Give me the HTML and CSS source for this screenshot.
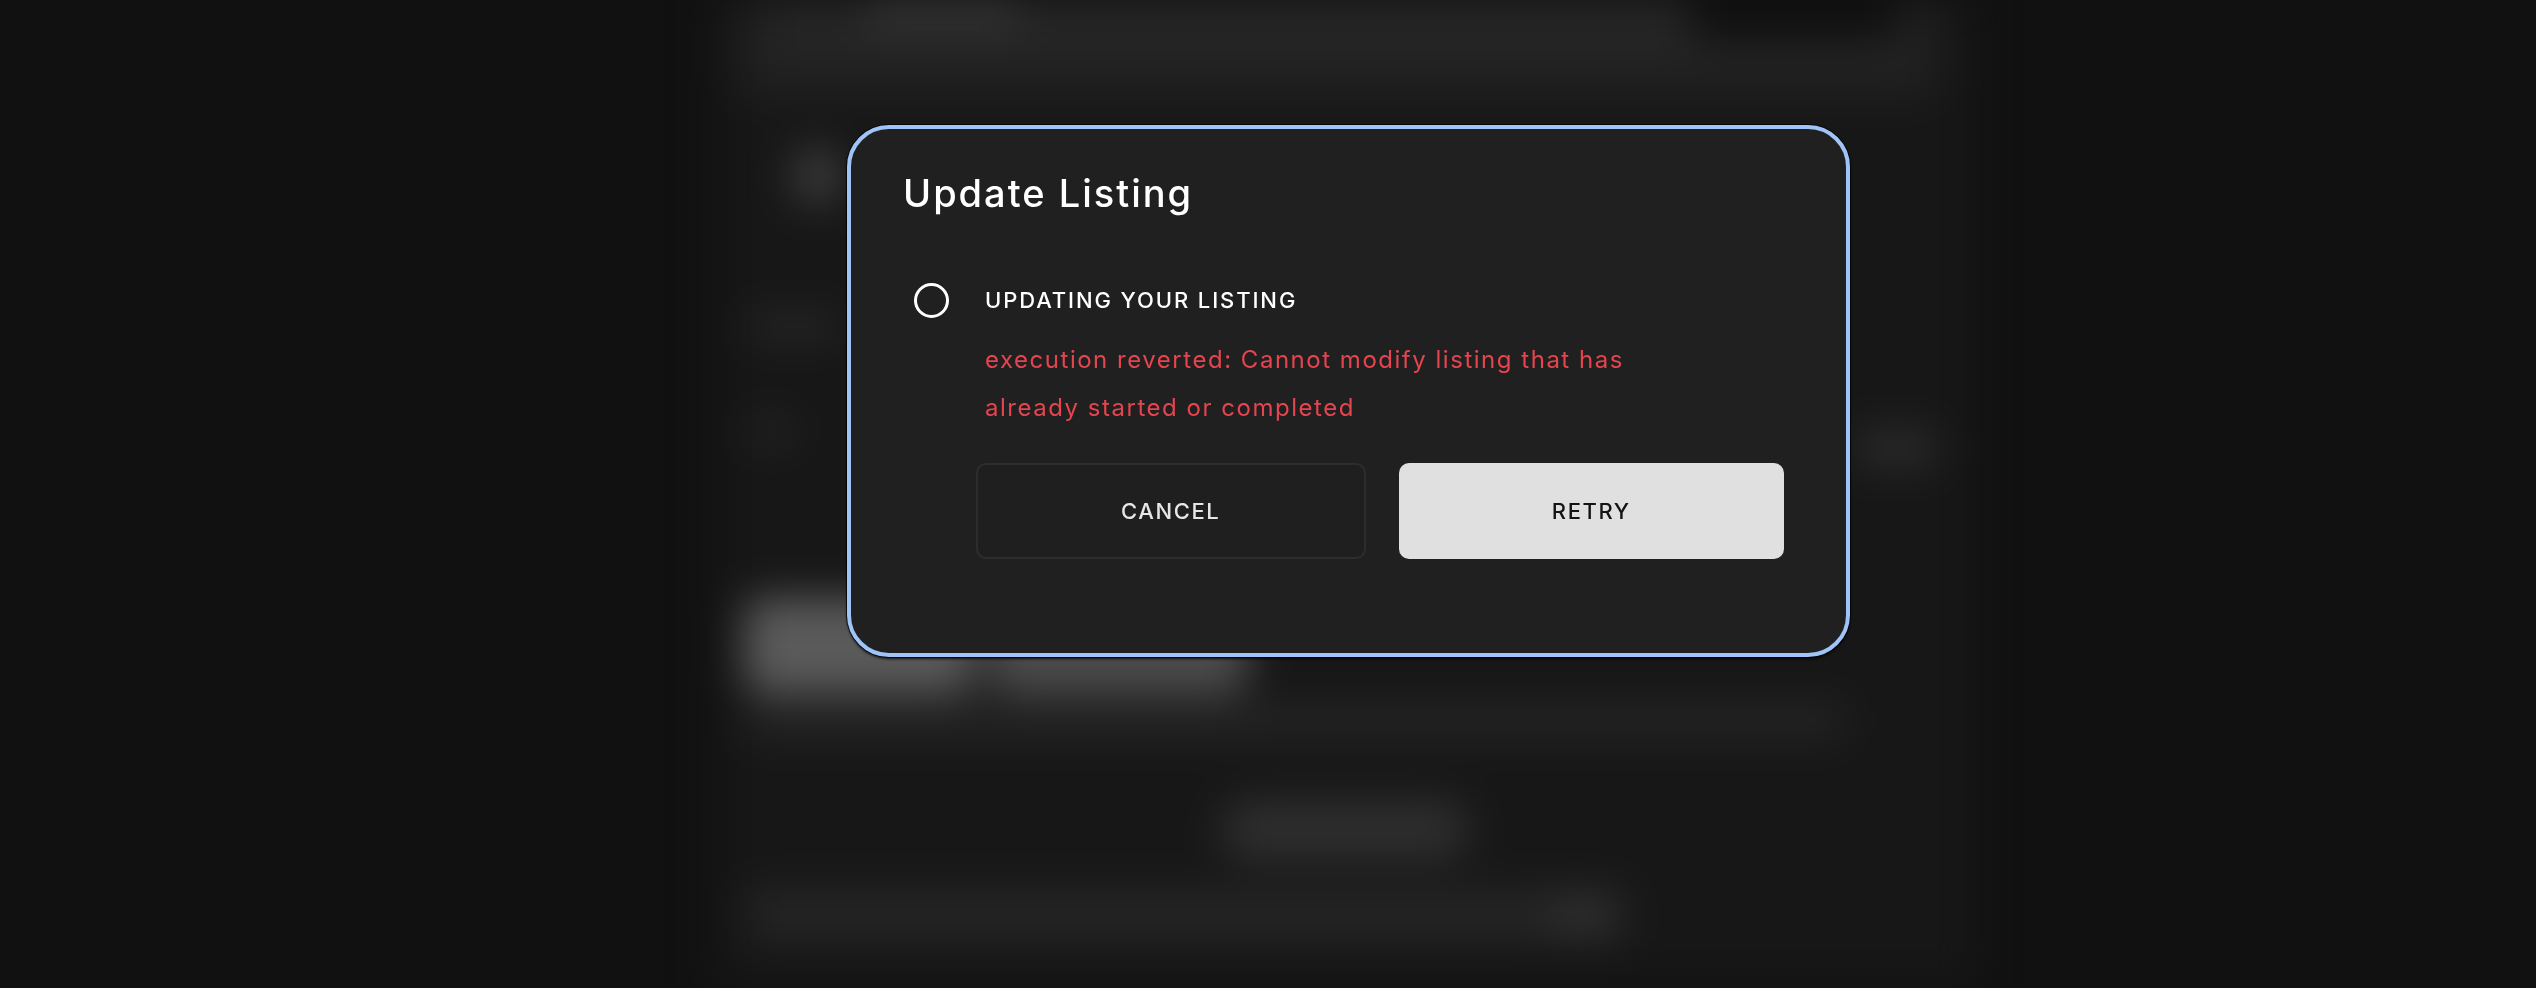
FILE: index.html
```html
<!DOCTYPE html>
<html lang="en">
<head>
<meta charset="utf-8">
<title>Update Listing</title>
<link rel="stylesheet" href="styles.css">
</head>
<body>
<div class="page" aria-hidden="true">
  <div class="top-card">
    <div class="search">
      <span class="search-text"></span>
      <span class="search-btn"></span>
    </div>
  </div>
  <div class="avatar"></div>
  <div class="line l1"></div>
  <div class="row-between">
    <span class="line l2"></span>
    <span class="chip"></span>
  </div>
  <div class="heading">
    <span class="hw w1"></span>
    <span class="hw w2"></span>
  </div>
  <div class="subtext"></div>
  <div class="pill"></div>
  <div class="bottom-row"><span class="bottom-tag"></span></div>
</div>

<div class="overlay">
  <div class="modal" role="dialog" aria-labelledby="modal-title">
    <h2 class="modal-title" id="modal-title">Update Listing</h2>
    <div class="step">
      <span class="step-icon"></span>
      <span class="step-label">UPDATING YOUR LISTING</span>
    </div>
    <p class="step-error">execution reverted: Cannot modify listing that has already started or completed</p>
    <div class="actions">
      <button class="btn btn-cancel" type="button">CANCEL</button>
      <button class="btn btn-retry" type="button">RETRY</button>
    </div>
  </div>
</div>
</body>
</html>
```

FILE: styles.css
```css
* { box-sizing: border-box; }

html, body {
  margin: 0;
  padding: 0;
  width: 2536px;
  height: 988px;
  overflow: hidden;
  background: #111111;
  font-family: Inter, "Liberation Sans", sans-serif;
}

/* ---------- blurred page behind the dialog ---------- */
.page {
  width: 1262px;
  height: 988px;
  margin-left: 714px;
  background: #171717;
  filter: blur(20px);
  display: flex;
  flex-direction: column;
  overflow: hidden;
}

.top-card {
  flex: none;
  width: 1204px;
  height: 137px;
  margin: -40px 0 0 22px;
  padding: 40px 32px 0 32px;
  background: #202020;
  border-radius: 24px;
}
.search {
  height: 57px;
  background: #262626;
  border-radius: 12px;
  display: flex;
  align-items: flex-start;
  justify-content: space-between;
  padding: 0 8px 0 100px;
}
.search-text {
  width: 150px;
  height: 24px;
  background: #3a3a3a;
}
.search-btn {
  width: 210px;
  height: 40px;
  background: #0f0f0f;
  border-radius: 8px;
}

.avatar {
  flex: none;
  width: 50px;
  height: 58px;
  margin: 50px 0 0 78px;
  background: #3c3c3c;
  border-radius: 50%;
}

.line {
  display: block;
  flex: none;
  height: 18px;
  background: #2e2e2e;
}
.l1 { width: 84px; margin: 112px 0 0 38px; }

.row-between {
  flex: none;
  display: flex;
  justify-content: space-between;
  align-items: flex-start;
  margin: 88px 40px 0 38px;
}
.l2 { width: 40px; height: 16px; }
.chip {
  width: 80px;
  height: 34px;
  margin-top: 8px;
  background: #2c2c2c;
  border-radius: 8px;
}

.heading {
  flex: none;
  display: flex;
  gap: 14px;
  margin: 133px 0 0 30px;
  height: 96px;
}
.hw { display: block; height: 100%; background: #5a5a5a; border-radius: 20px; }
.w1 { width: 230px; }
.w2 { width: 260px; background: #4c4c4c; }

.subtext {
  flex: none;
  width: 1095px;
  height: 30px;
  margin: 12px 0 0 33px;
  background: #262626;
}

.pill {
  flex: none;
  width: 250px;
  height: 60px;
  margin: 64px auto 0 auto;
  background: #2e2e2e;
  border-radius: 30px;
}

.bottom-row {
  flex: none;
  width: 876px;
  height: 54px;
  margin: 28px 0 0 33px;
  background: #242424;
  display: flex;
  justify-content: flex-end;
  align-items: center;
  padding-right: 8px;
}
.bottom-tag { width: 64px; height: 32px; background: #303030; }

/* ---------- dialog ---------- */
.overlay {
  position: fixed;
  inset: 0;
}

.modal {
  position: absolute;
  left: 847px;
  top: 125px;
  width: 1003px;
  height: 532px;
  background: #202020;
  border: 4px solid #9fc5f8;
  border-radius: 42px;
  padding: 41px 62px 0 52px;
  box-shadow: 0 0 0 1px rgba(0,0,0,0.7), 0 2px 3px rgba(0,0,0,0.8);
  color: #ffffff;
}

.modal-title {
  margin: 0;
  font-size: 38px;
  line-height: 46px;
  font-weight: 500;
  letter-spacing: 2px;
  color: #ffffff;
}

.step {
  display: flex;
  align-items: center;
  gap: 36px;
  margin: 66px 0 0 11px;
  height: 36px;
}
.step-icon {
  width: 35px;
  height: 35px;
  border: 3px solid #ffffff;
  border-radius: 50%;
  flex: none;
}
.step-label {
  font-size: 22px;
  line-height: 36px;
  font-weight: 500;
  letter-spacing: 1.9px;
  color: #ffffff;
}

.step-error {
  margin: 18px 0 0 82px;
  max-width: 680px;
  font-size: 24px;
  line-height: 48px;
  letter-spacing: 1.52px;
  color: #e6444f;
}

.actions {
  display: flex;
  gap: 33px;
  margin: 31px 0 0 73px;
  width: 808px;
}
.btn {
  flex: 1;
  height: 96px;
  border-radius: 10px;
  font-family: inherit;
  font-size: 22px;
  font-weight: 500;
  letter-spacing: 1.6px;
  cursor: pointer;
}
.btn-cancel {
  background: #1f1f1f;
  border: 2px solid #2d2d2d;
  color: #e6e6e6;
}
.btn-retry {
  background: #e0e0e0;
  border: none;
  color: #141414;
}
```
